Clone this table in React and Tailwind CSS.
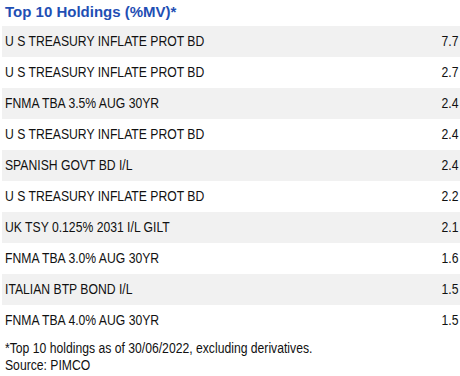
const holdings = [
  ['U S TREASURY INFLATE PROT BD', '7.7'],
  ['U S TREASURY INFLATE PROT BD', '2.7'],
  ['FNMA TBA 3.5% AUG 30YR', '2.4'],
  ['U S TREASURY INFLATE PROT BD', '2.4'],
  ['SPANISH GOVT BD I/L', '2.4'],
  ['U S TREASURY INFLATE PROT BD', '2.2'],
  ['UK TSY 0.125% 2031 I/L GILT', '2.1'],
  ['FNMA TBA 3.0% AUG 30YR', '1.6'],
  ['ITALIAN BTP BOND I/L', '1.5'],
  ['FNMA TBA 4.0% AUG 30YR', '1.5'],
]

export default function App() {
  return (
    <div className="w-[460px] h-[376px] bg-white overflow-hidden font-['Liberation_Sans',Arial,sans-serif] text-[#111]">
      <h2 className="pl-[5px] pt-[3px] h-[26px] text-[15px] leading-[18px] font-bold text-[#1f4fb4]">
        Top 10 Holdings (%MV)*
      </h2>
      <div className="ml-[2px]">
        {holdings.map(([name, value], i) => (
          <div
            key={i}
            className={`flex items-center justify-between h-[31px] pl-[3px] pr-[2px] text-[14px] ${i % 2 === 0 ? 'bg-[#f1f1f1]' : 'bg-white'}`}
          >
            <span className="inline-block origin-left scale-x-[0.87] whitespace-nowrap">{name}</span>
            <span className="inline-block origin-right scale-x-[0.87]">{value}</span>
          </div>
        ))}
      </div>
      <div className="pl-[5px] pt-[4px] text-[14px] leading-[17px]">
        <p className="origin-left scale-x-[0.87] whitespace-nowrap">*Top 10 holdings as of 30/06/2022, excluding derivatives.</p>
        <p className="origin-left scale-x-[0.87] whitespace-nowrap">Source: PIMCO</p>
      </div>
    </div>
  )
}
